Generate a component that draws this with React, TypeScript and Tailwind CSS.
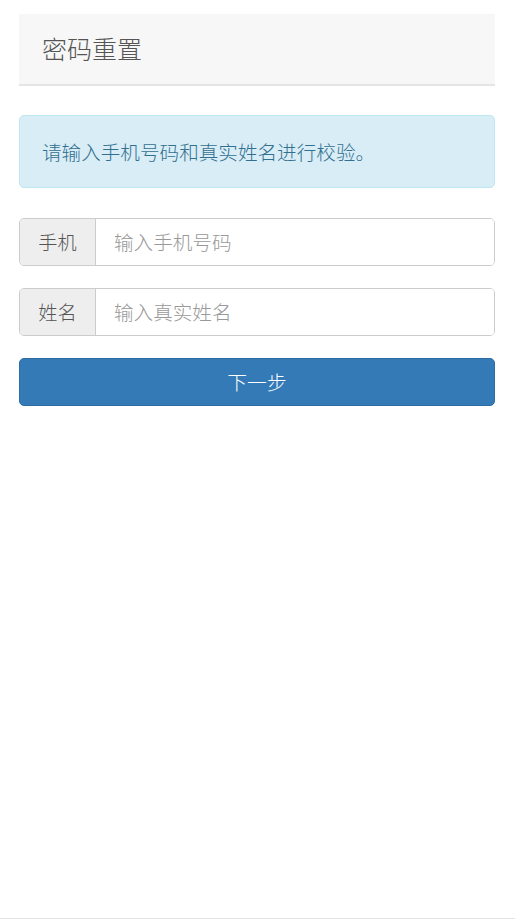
export default function App() {
  return (
    <div
      className="flex h-[920px] flex-col bg-white"
      style={{ fontFamily: '"Noto Sans CJK SC", "Liberation Sans", sans-serif' }}
    >
      <div className="flex flex-col pl-[19px] pr-[22px] pt-[14px]">
        {/* 标题 */}
        <div className="flex h-[72px] items-center border-b-2 border-[#e5e5e5] bg-[#f7f7f7] px-[23px]">
          <h1 className="text-[25px] font-light text-[#555]">密码重置</h1>
        </div>

        {/* 提示 */}
        <div className="mt-[29px] flex h-[73px] items-center rounded-[5px] border border-[#bce8f1] bg-[#d9edf7] px-[22px]">
          <p className="text-[19.6px] font-light text-[#31708f]">请输入手机号码和真实姓名进行校验。</p>
        </div>

        <InputRow label="手机" placeholder="输入手机号码" className="mt-[30px]" />
        <InputRow label="姓名" placeholder="输入真实姓名" className="mt-[22px]" />

        <button
          type="button"
          className="mt-[22px] h-[48px] rounded-[5px] border border-[#2e6da4] bg-[#337ab7] text-[19.8px] font-light text-white"
        >
          下一步
        </button>
      </div>

      <div className="mt-auto mb-px h-px w-[515px] bg-[#e3e3e3]" />
    </div>
  )
}

function InputRow({
  label,
  placeholder,
  className,
}: {
  label: string
  placeholder: string
  className: string
}) {
  return (
    <div
      className={`flex h-[48px] overflow-hidden rounded-[5px] border border-[#ccc] ${className}`}
    >
      <span className="flex w-[76px] shrink-0 items-center justify-center border-r border-[#ccc] bg-[#eee] text-[19.2px] font-light text-[#555]">
        {label}
      </span>
      <input
        className="min-w-0 flex-1 bg-white px-[18px] text-[19.6px] font-light text-[#555] outline-none placeholder:text-[#999]"
        placeholder={placeholder}
      />
    </div>
  )
}
